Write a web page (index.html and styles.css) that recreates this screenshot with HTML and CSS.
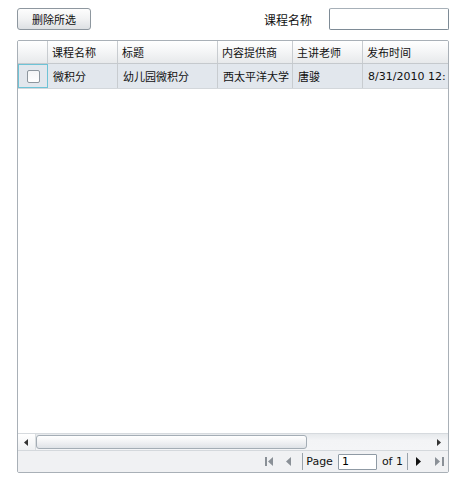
FILE: index.html
```html
<!DOCTYPE html>
<html>
<head>
<meta charset="utf-8">
<link rel="stylesheet" href="styles.css">
</head>
<body>
<div class="toolbar">
  <button class="btn">删除所选</button>
  <div class="search">
    <span class="search-label">课程名称</span>
    <input class="search-input" type="text">
  </div>
</div>
<div class="grid">
  <div class="row head">
    <div class="cell"></div>
    <div class="cell">课程名称</div>
    <div class="cell">标题</div>
    <div class="cell">内容提供商</div>
    <div class="cell">主讲老师</div>
    <div class="cell">发布时间</div>
  </div>
  <div class="row data">
    <div class="cell check-cell"><span class="checkbox"></span></div>
    <div class="cell">微积分</div>
    <div class="cell">幼儿园微积分</div>
    <div class="cell">西太平洋大学</div>
    <div class="cell">唐骏</div>
    <div class="cell latin">8/31/2010 12:</div>
  </div>
  <div class="body-fill"></div>
  <div class="hscroll">
    <div class="sb-btn"><svg width="5" height="7" viewBox="0 0 5 7"><path d="M4 0 L0 3.5 L4 7 Z" fill="#333"/></svg></div>
    <div class="sb-thumb"></div>
    <div class="sb-track"></div>
    <div class="sb-btn right"><svg width="5" height="7" viewBox="0 0 5 7"><path d="M0 0 L4 3.5 L0 7 Z" fill="#333"/></svg></div>
  </div>
  <div class="pager">
    <span class="pg-icon first"><svg width="9" height="9" viewBox="0 0 9 9"><rect x="0" y="0" width="2" height="9" fill="#8a9097"/><path d="M8 0 L3 4.5 L8 9 Z" fill="#8a9097"/></svg></span>
    <span class="pg-icon prev"><svg width="6" height="9" viewBox="0 0 6 9"><path d="M5 0 L0 4.5 L5 9 Z" fill="#8a9097"/></svg></span>
    <span class="pg-sep sep1"></span>
    <span class="pg-text page-word">Page</span>
    <input class="pg-input" type="text" value="1">
    <span class="pg-text of-word">of 1</span>
    <span class="pg-sep sep2"></span>
    <span class="pg-icon next"><svg width="6" height="9" viewBox="0 0 6 9"><path d="M0 0 L5 4.5 L0 9 Z" fill="#111"/></svg></span>
    <span class="pg-icon last"><svg width="9" height="9" viewBox="0 0 9 9"><path d="M0 0 L5 4.5 L0 9 Z" fill="#8a9097"/><rect x="7" y="0" width="2" height="9" fill="#8a9097"/></svg></span>
  </div>
</div>
</body>
</html>
```

FILE: styles.css
```css
* { box-sizing: border-box; }
body {
  margin: 0;
  background: #fff;
  font-family: "DejaVu Sans", "Noto Sans CJK SC", sans-serif;
  font-size: 11px;
  color: #000;
  width: 465px;
  height: 484px;
}
.toolbar {
  display: flex;
  justify-content: space-between;
  align-items: center;
  padding: 8px 16px 0 17px;
  height: 30px;
}
.btn {
  width: 74px;
  height: 22px;
  margin: 0;
  padding: 0;
  border: 1px solid #8e979f;
  border-radius: 3px;
  background: linear-gradient(#fdfdfd, #f1f2f3 50%, #dde0e3);
  font-family: "Noto Sans CJK SC", sans-serif;
  font-size: 11px;
  color: #111;
}
.search {
  display: flex;
  align-items: center;
  gap: 17px;
}
.search-label {
  font-family: "Noto Sans CJK SC", sans-serif;
  font-size: 12px;
  color: #111;
}
.search-input {
  width: 120px;
  height: 22px;
  margin: 0;
  border: 1px solid #7e8b96;
  border-top-color: #a7b0b8;
  border-radius: 2px;
  background: #fff;
}
.grid {
  margin: 10px 16px 0 17px;
  height: 433px;
  border: 1px solid #a9b0b7;
  border-radius: 2px;
  display: flex;
  flex-direction: column;
  overflow: hidden;
}
.row {
  display: grid;
  grid-template-columns: 30px 70px 100px 75px 70px 1fr;
  flex: none;
}
.cell {
  font-family: "Noto Sans CJK SC", sans-serif;
  font-size: 11px;
  white-space: nowrap;
  overflow: hidden;
  display: flex;
  align-items: center;
  border-right: 1px solid #c8ccd0;
  color: #111;
}
.cell:last-child { border-right: none; }
.head {
  height: 23px;
  background: linear-gradient(#ffffff, #f4f5f6 50%, #e7e9eb);
  border-bottom: 1px solid #c5c9cd;
}
.head .cell { padding-left: 4px; }
.data {
  height: 25px;
  background: #e2e7ed;
  border-bottom: 1px solid #d3d7db;
}
.data .cell { padding-left: 5px; }
.data .latin {
  font-family: "DejaVu Sans", sans-serif;
  font-size: 11px;
}
.check-cell {
  border: 1px solid #6ec3d6;
  justify-content: center;
  padding-left: 0 !important;
}
.checkbox {
  width: 13px;
  height: 13px;
  border: 1px solid #8d969e;
  border-radius: 2px;
  background: linear-gradient(#f4f5f6, #ffffff);
}
.body-fill {
  flex: 1;
  background: #fff;
}
.hscroll {
  flex: none;
  height: 17px;
  display: flex;
  align-items: stretch;
  background: linear-gradient(#e6e9ec, #f3f4f6 40%, #f4f5f7);
  border-top: 1px solid #d6dade;
}
.sb-btn {
  width: 18px;
  display: flex;
  align-items: center;
  justify-content: center;
}
.sb-btn:first-child {
  background: linear-gradient(#ffffff, #eef0f2);
  border-right: 1px solid #d9dde0;
}
.sb-thumb {
  width: 271px;
  margin: 1px 0;
  border: 1px solid #a4adb5;
  border-radius: 3px;
  background: linear-gradient(#ffffff, #f1f2f4 50%, #dfe3e7);
}
.sb-track { flex: 1; }
.sb-btn.right { width: 17px; }
.pager {
  flex: none;
  height: 22px;
  display: flex;
  align-items: center;
  justify-content: flex-end;
  padding-right: 4px;
  background: #f0f1f3;
  border-top: 1px solid #d4d8dc;
}
.pg-icon {
  display: flex;
  align-items: center;
}
.prev { margin-left: 12px; }
.sep1 { margin-left: 10px; }
.page-word { margin-left: 3px; }
.pg-input { margin-left: 5px; }
.of-word { margin-left: 5px; }
.sep2 { margin-left: 4px; }
.next { margin-left: 8px; }
.last { margin-left: 13px; }
.pg-sep {
  width: 1px;
  height: 17px;
  background: #9aa3ab;
}
.pg-text {
  font-family: "DejaVu Sans", sans-serif;
  font-size: 11px;
  color: #111;
}
.pg-input {
  width: 39px;
  height: 16px;
  padding: 0 0 0 3px;
  border: 1px solid #8f9aa4;
  border-radius: 1px;
  font-family: "DejaVu Sans", sans-serif;
  font-size: 11px;
  background: #fff;
}
```
